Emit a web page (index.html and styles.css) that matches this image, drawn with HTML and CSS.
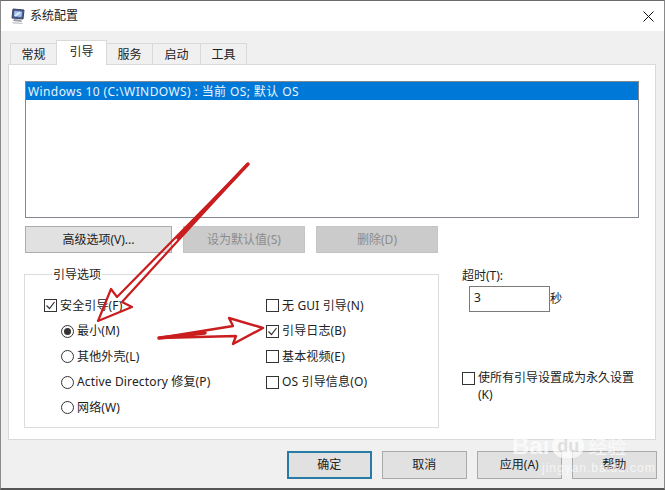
FILE: index.html
```html
<!DOCTYPE html>
<html lang="zh-CN">
<head>
    <meta charset="UTF-8">
    <title>系统配置</title>
    <link rel="stylesheet" href="styles.css">
</head>
<body>
    <div class="window">
        <div class="titlebar">
            <svg class="app-icon" width="16" height="17" viewBox="0 0 16 17">
                <path d="M3 1 L14 2 L13 11 L2 10 Z" fill="#4a5f96" stroke="#39425f"/>
                <path d="M4.500 3 L12 3.700 L11.400 9 L4 8.300 Z" fill="#a9c6ee"/>
                <path d="M5 8 L10 4" stroke="#eef4ff" stroke-width="1.500"/>
                <path d="M4 11 L11 12 L12 14 L3 13 Z" fill="#9c9ea6"/>
                <path d="M2 14 L13 15 L12 16 L3 15.500 Z" fill="#c4c4c8"/>
            </svg>
            <span class="title-text">系统配置</span>
            <svg class="close-icon" width="11" height="11" viewBox="0 0 11 11">
                <path d="M0.500 0.500 L10.500 10.500 M10.500 0.500 L0.500 10.500" stroke="#111" stroke-width="1"/>
            </svg>
        </div>

        <div class="content">
            <div class="tabs">
                <div class="tab tab-general">常规</div>
                <div class="tab tab-active">引导</div>
                <div class="tab tab-services">服务</div>
                <div class="tab tab-startup">启动</div>
                <div class="tab tab-tools">工具</div>
            </div>

            <div class="panel">
                <div class="os-list">
                    <div class="os-item">Windows 10 (C:\WINDOWS) : 当前 OS; 默认 OS</div>
                </div>

                <div class="list-buttons">
                    <div class="btn btn-advanced">高级选项(V)...</div>
                    <div class="btn btn-disabled">设为默认值(S)</div>
                    <div class="btn btn-disabled">删除(D)</div>
                </div>

                <div class="lower">
                    <fieldset class="group">
                        <legend class="group-title">引导选项</legend>
                        <div class="group-col group-left">
                            <div class="opt">
                                <span class="box"><svg width="11" height="11" viewBox="0 0 11 11"><path d="M1.500 5.500 L4.500 8.500 L9.500 2" fill="none" stroke="#333" stroke-width="1.200"/></svg></span>
                                安全引导(F)
                            </div>
                            <div class="opt opt-sub"><span class="radio radio-on"></span>最小(M)</div>
                            <div class="opt opt-sub"><span class="radio"></span>其他外壳(L)</div>
                            <div class="opt opt-sub"><span class="radio"></span>Active Directory 修复(P)</div>
                            <div class="opt opt-sub"><span class="radio"></span>网络(W)</div>
                        </div>
                        <div class="group-col">
                            <div class="opt"><span class="box"></span>无 GUI 引导(N)</div>
                            <div class="opt">
                                <span class="box"><svg width="11" height="11" viewBox="0 0 11 11"><path d="M1.500 5.500 L4.500 8.500 L9.500 2" fill="none" stroke="#333" stroke-width="1.200"/></svg></span>
                                引导日志(B)
                            </div>
                            <div class="opt"><span class="box"></span>基本视频(E)</div>
                            <div class="opt"><span class="box"></span>OS 引导信息(O)</div>
                        </div>
                    </fieldset>

                    <div class="side">
                        <div class="timeout-label">超时(T):</div>
                        <div class="timeout-row">
                            <div class="timeout-input">3</div>
                            <span class="timeout-unit">秒</span>
                        </div>
                        <div class="permanent">
                            <span class="box"></span>
                            <span class="permanent-text">使所有引导设置成为永久设置(K)</span>
                        </div>
                    </div>
                </div>
            </div>

            <div class="dialog-buttons">
                <div class="btn btn-dialog btn-default">确定</div>
                <div class="btn btn-dialog">取消</div>
                <div class="btn btn-dialog">应用(A)</div>
                <div class="btn btn-dialog">帮助</div>
            </div>
        </div>

        <!-- red annotation arrows drawn over the dialog -->
        <svg class="arrows" width="665" height="490" viewBox="0 0 665 490">
            <path d="M248 164 L117 297 L111 289 L98 321 L132 307 L122 302 Z" fill="none" stroke="#c91d1f" stroke-width="2.200" stroke-linejoin="round"/>
            <path d="M248 164 L178 238" stroke="#c91d1f" stroke-width="3.500" stroke-linecap="round"/>
            <path d="M159 338 L233 326 L229 318 L263 328 L233 344 L236 336 Z" fill="none" stroke="#c91d1f" stroke-width="2.400" stroke-linejoin="round"/>
            <path d="M159 338 L205 333" stroke="#c91d1f" stroke-width="3.500" stroke-linecap="round"/>
        </svg>

        <div class="watermark">
            <svg class="paw" width="40" height="34" viewBox="0 0 40 34">
                <g fill="none" stroke="#fff" stroke-width="2">
                    <circle cx="6" cy="19" r="4.500"/>
                    <circle cx="14" cy="7" r="5"/>
                    <circle cx="26" cy="7" r="5"/>
                    <circle cx="34" cy="19" r="4.500"/>
                </g>
            </svg>
            <div class="wm-brand"><span>Bai</span><span class="wm-du">du</span><span class="wm-cn">经验</span></div>
            <div class="wm-url">jingyan.baidu.com</div>
        </div>
    </div>
</body>
</html>
```

FILE: styles.css
```css
* {
    box-sizing: border-box;
}
body {
    margin: 0;
    font-family: "Noto Sans", "Noto Sans CJK SC", sans-serif;
    font-size: 12px;
    line-height: 16px;
    color: #222;
}
.window {
    position: relative;
    width: 665px;
    height: 490px;
    overflow: hidden;
    background-color: #f0f0f0;
    border-top: 1px solid #6a6a6a;
    border-left: 1px solid #8a8a8a;
    border-right: 1px solid #8a8a8a;
    border-bottom: 2px solid #555;
}
.titlebar {
    display: flex;
    align-items: center;
    height: 30px;
    padding: 0 9px;
    background-color: #fff;
}
.app-icon {
    flex: none;
}
.title-text {
    margin-left: 4px;
}
.close-icon {
    margin-left: auto;
    margin-right: 1px;
}
.content {
    padding: 9px 8px 0 7px;
}

/* tabs */
.tabs {
    display: flex;
    align-items: flex-end;
    height: 24px;
    padding-left: 2px;
}
.tab {
    display: flex;
    justify-content: center;
    align-items: center;
    height: 21px;
    padding-top: 1px;
    background-color: #f0f0f0;
    border: 1px solid #d9d9d9;
    border-bottom: none;
    margin-left: -1px;
}
.tab-general {
    width: 47px;
    margin-left: 0;
}
.tab-active {
    position: relative;
    width: 51px;
    height: 25px;
    margin-bottom: -1px;
    padding-top: 0;
    padding-bottom: 2px;
    background-color: #fff;
}
.tab-services {
    width: 47px;
}
.tab-startup {
    width: 49px;
}
.tab-tools {
    width: 47px;
}
.panel {
    height: 376px;
    padding: 16px 16px 0;
    background-color: #fff;
    border: 1px solid #d9d9d9;
}

/* os list */
.os-list {
    height: 137px;
    border: 1px solid #828790;
    background-color: #fff;
}
.os-item {
    height: 18px;
    padding: 1px 0 0 2px;
    line-height: 17px;
    background-color: #0078d7;
    color: #e8f4ff;
    letter-spacing: 0.4px;
}
.list-buttons {
    display: flex;
    gap: 11px;
    margin-top: 8px;
}
.btn {
    display: flex;
    justify-content: center;
    align-items: center;
    width: 122px;
    height: 27px;
    background-color: #e1e1e1;
    border: 1px solid #adadad;
}
.btn-advanced {
    width: 147px;
}
.btn-disabled {
    background-color: #cbcbcb;
    border-color: #c4c4c4;
    color: #8c8c8c;
}

/* options group */
.lower {
    display: flex;
    margin-top: 12px;
    margin-left: -1px;
}
.group {
    display: flex;
    flex: none;
    width: 415px;
    height: 163px;
    margin: 0;
    padding: 10px 0 0 19px;
    border: 1px solid #dcdcdc;
}
.group-title {
    margin-left: 8px;
    padding: 2px 1px 0;
}
.group-col {
    display: flex;
    flex-direction: column;
}
.group-left {
    width: 222px;
}
.opt {
    display: flex;
    align-items: center;
    height: 25.500px;
    letter-spacing: 0.15px;
}
.opt-sub {
    padding-left: 17px;
}
.box {
    display: flex;
    justify-content: center;
    align-items: center;
    flex: none;
    width: 13px;
    height: 13px;
    margin-right: 3px;
    background-color: #fff;
    border: 1px solid #333;
}
.radio {
    display: flex;
    justify-content: center;
    align-items: center;
    flex: none;
    width: 13px;
    height: 13px;
    margin-right: 3px;
    background-color: #fff;
    border: 1px solid #333;
    border-radius: 50%;
}
.radio-on::before {
    content: "";
    width: 7px;
    height: 7px;
    border-radius: 50%;
    background-color: #333;
}

/* timeout and permanent setting */
.side {
    width: 175px;
    margin-left: 23px;
}
.timeout-label {
    margin-top: 3px;
}
.timeout-row {
    display: flex;
    align-items: center;
    margin-top: 2px;
    margin-left: 7px;
}
.timeout-input {
    width: 81px;
    height: 26px;
    padding-left: 4px;
    line-height: 22px;
    background-color: #fff;
    border: 1px solid #7a7a7a;
}
.timeout-unit {
    margin-top: -1px;
}
.permanent {
    display: flex;
    margin-top: 57px;
}
.permanent .box {
    margin-top: 3px;
}
.permanent-text {
    width: 160px;
    line-height: 17px;
}

/* bottom buttons */
.dialog-buttons {
    display: flex;
    justify-content: flex-end;
    gap: 9.500px;
    margin-top: 11px;
    margin-right: -1px;
}
.btn-dialog {
    width: 85.500px;
    height: 28px;
    border-color: #aaa;
}
.btn-default {
    border: 2px solid #2a7aa6;
}

/* overlays */
.arrows {
    position: absolute;
    top: -1px;
    left: -1px;
    pointer-events: none;
}
.watermark {
    position: absolute;
    top: 411px;
    left: 511px;
    width: 130px;
    color: #fff;
    opacity: 0.7;
    pointer-events: none;
}
.paw {
    display: block;
    margin-left: 30px;
    margin-bottom: -12px;
}
.wm-brand {
    display: flex;
    align-items: center;
    font-family: "Liberation Sans", sans-serif;
    font-size: 24px;
    font-weight: bold;
    line-height: 24px;
}
.wm-du {
    margin-left: 3px;
    padding: 0 5px;
    font-size: 18px;
    background-color: #fff;
    color: #d8d8d8;
    border-radius: 12px;
}
.wm-cn {
    margin-left: 4px;
    font-family: "Noto Sans CJK SC", sans-serif;
    font-size: 19px;
    font-weight: normal;
}
.wm-url {
    margin-top: 3px;
    margin-left: 30px;
    font-family: "Liberation Sans", sans-serif;
    font-size: 12px;
    letter-spacing: 1px;
    line-height: 14px;
}
```
